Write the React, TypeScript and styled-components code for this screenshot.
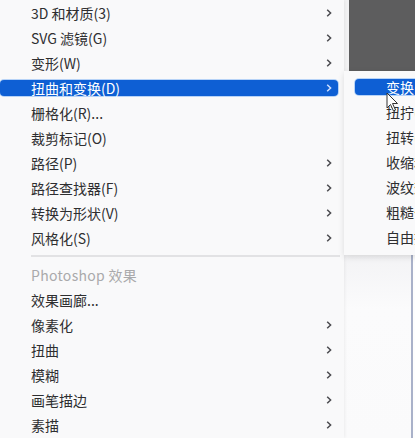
import React from "react";
import styled, { createGlobalStyle } from "styled-components";

const Global = createGlobalStyle`
  html, body { margin: 0; padding: 0; background: #f6f6f7; }
  body { width: 415px; height: 438px; overflow: hidden; font-family: "Noto Sans CJK SC", "Noto Sans", sans-serif; }
`;

const Page = styled.div`
  display: flex;
  width: 415px;
  height: 438px;
  overflow: hidden;
  position: relative;
`;

const Menu = styled.div`
  width: 344px;
  flex: none;
  height: 438px;
  background: #f9f9fa;
  box-shadow: 1px 0 3px rgba(0, 0, 0, 0.06);
  display: flex;
  flex-direction: column;
  position: relative;
  z-index: 1;
`;

const Item = styled.div`
  height: 25px;
  display: flex;
  align-items: center;
  flex: none;
`;

const ItemBody = styled.div<{ $active?: boolean; $disabled?: boolean }>`
  flex: 1;
  height: 16px;
  margin-right: 6px;
  padding: 0 6px 0 31px;
  display: flex;
  align-items: center;
  justify-content: space-between;
  border-radius: 4px;
  font-size: 14px;
  white-space: nowrap;
  color: ${(p) => (p.$active ? "#ffffff" : p.$disabled ? "#a9a9ab" : "#2e2e30")};
  background: ${(p) => (p.$active ? "#0e5fd4" : "transparent")};
  box-shadow: ${(p) => (p.$active ? "0 0 0 1px rgba(60,140,240,0.35)" : "none")};
  letter-spacing: ${(p) => (p.$disabled ? "0.3px" : "0")};
`;

const Separator = styled.div`
  height: 12px;
  display: flex;
  align-items: center;
  padding: 0 4px 0 31px;
  flex: none;
  &::after {
    content: "";
    flex: 1;
    height: 2px;
    background: #e2e2e4;
  }
`;

const Chevron = ({ light }: { light?: boolean }) => (
  <svg width="6" height="8" viewBox="0 0 6 8">
    <path d="M1.2 0.8 L4.6 4 L1.2 7.2" fill="none" stroke={light ? "#cfe0ff" : "#4a4a4e"} strokeWidth="1.5" />
  </svg>
);

const Side = styled.div`
  flex: 1;
  display: flex;
  flex-direction: column;
  background: #f2f2f3;
`;

const DarkBlock = styled.div`
  height: 71px;
  margin-left: 5px;
  background: #5d5d5e;
  flex: none;
`;

const Sub = styled.div`
  height: 184px;
  flex: none;
  background: #f9f9fa;
  padding: 3px 0 0 11px;
  box-sizing: border-box;
  box-shadow: 0 2px 6px rgba(0, 0, 0, 0.12);
  position: relative;
  z-index: 2;
  overflow: hidden;
  display: flex;
  flex-direction: column;
`;

const SubBody = styled(ItemBody)`
  margin-right: 0;
  padding-left: 31px;
  border-radius: 4px 0 0 4px;
  overflow: hidden;
`;

const Lower = styled.div`
  flex: 1;
  display: flex;
  background: linear-gradient(180deg, #f3f3f5 0%, #fbfbfc 30%, #fafafb 100%);
`;

const LowerPane = styled.div`
  width: 67px;
  flex: none;
`;

const LowerLine = styled.div`
  width: 2px;
  flex: none;
  background: #a9b1c9;
`;

const LowerRest = styled.div`
  flex: 1;
  background: #fdfdfd;
`;

const Cursor = styled.svg`
  position: absolute;
  left: 386px;
  top: 92px;
  z-index: 5;
`;

const mainItems: { label: string; sub?: boolean; active?: boolean }[] = [
  { label: "3D 和材质(3)", sub: true },
  { label: "SVG 滤镜(G)", sub: true },
  { label: "变形(W)", sub: true },
  { label: "扭曲和变换(D)", sub: true, active: true },
  { label: "栅格化(R)..." },
  { label: "裁剪标记(O)" },
  { label: "路径(P)", sub: true },
  { label: "路径查找器(F)", sub: true },
  { label: "转换为形状(V)", sub: true },
  { label: "风格化(S)", sub: true },
];

const psItems = ["效果画廊...", "像素化", "扭曲", "模糊", "画笔描边", "素描"];

const subItems = ["变换(T)...", "扭拧(K)...", "扭转(W)...", "收缩和膨胀(P)...", "波纹效果(Z)...", "粗糙化(R)...", "自由扭曲(F)..."];

export default function App() {
  return (
    <Page>
      <Global />
      <Menu>
        {mainItems.map((it) => (
          <Item key={it.label}>
            <ItemBody $active={it.active}>
              <span>{it.label}</span>
              {it.sub && <Chevron light={it.active} />}
            </ItemBody>
          </Item>
        ))}
        <Separator />
        <Item>
          <ItemBody $disabled>
            <span>Photoshop 效果</span>
          </ItemBody>
        </Item>
        {psItems.map((l, i) => (
          <Item key={l}>
            <ItemBody>
              <span>{l}</span>
              {i > 0 && <Chevron />}
            </ItemBody>
          </Item>
        ))}
      </Menu>
      <Side>
        <DarkBlock />
        <Sub>
          {subItems.map((l, i) => (
            <Item key={l}>
              <SubBody $active={i === 0}>
                <span>{l}</span>
              </SubBody>
            </Item>
          ))}
        </Sub>
        <Lower>
          <LowerPane />
          <LowerLine />
          <LowerRest />
        </Lower>
      </Side>
      <Cursor width="14" height="20" viewBox="0 0 14 20">
        <path d="M1 1 L1 16 L4.5 12.5 L7.5 19 L9.5 18 L6.5 11.5 L11.5 11.5 Z" fill="#ffffff" stroke="#333" strokeWidth="1" strokeLinejoin="round" />
      </Cursor>
    </Page>
  );
}
